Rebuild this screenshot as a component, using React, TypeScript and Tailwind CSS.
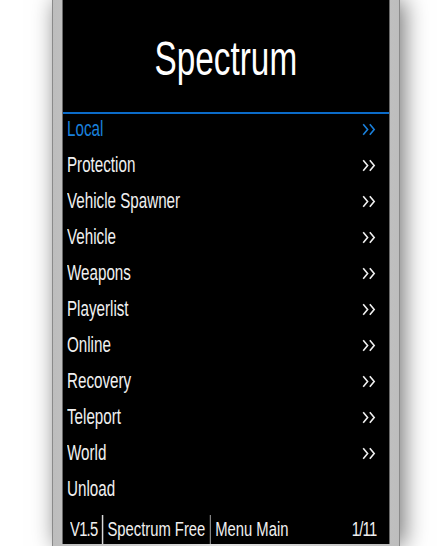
import React from "react";

const items = [
  "Local",
  "Protection",
  "Vehicle Spawner",
  "Vehicle",
  "Weapons",
  "Playerlist",
  "Online",
  "Recovery",
  "Teleport",
  "World",
];

function Chevrons() {
  return (
    <svg width="14" height="13" viewBox="0 0 14 13" fill="none">
      <path d="M1.2 1.2 L5.6 6.5 L1.2 11.8" stroke="currentColor" strokeWidth="1.6" />
      <path d="M7.8 1.2 L12.2 6.5 L7.8 11.8" stroke="currentColor" strokeWidth="1.6" />
    </svg>
  );
}

export default function App() {
  return (
    <div
      className="w-[447px] h-[546px] bg-white flex justify-center overflow-hidden"
      style={{ fontFamily: '"Liberation Sans", Arial, sans-serif' }}
    >
      <div className="ml-[5px] w-[348px] h-[546px] flex flex-col bg-gradient-to-r from-[#bdbdbd] via-[#e2e2e2] to-[#bdbdbd] border-x border-[#8a8a8a] px-[9px] pb-[2px] shadow-[4px_0_22px_rgba(0,0,0,0.55)]">
        <div className="flex-1 flex flex-col bg-black border-x border-[#6a6a6a]">
          {/* Header */}
          <div className="h-[112px] flex items-center justify-center pt-[4px]">
            <h1 className="text-white text-[49px] leading-none inline-block scale-x-[0.68] origin-center">Spectrum</h1>
          </div>
          <div className="h-[2px] bg-[#0b6bc9]" />

          {/* Menu */}
          <div className="flex flex-col">
            {items.map((item, i) => (
              <div
                key={item}
                className={`h-[36px] flex items-center justify-between pl-[4px] pr-[13px] pb-[6px] text-[22px] leading-none ${
                  i === 0 ? "text-[#1a80dc]" : "text-[#f0f0f0]"
                }`}
              >
                <span className="inline-block origin-left scale-x-[0.69] whitespace-nowrap">{item}</span>
                <Chevrons />
              </div>
            ))}
            <div className="h-[36px] flex items-center pl-[4px] pb-[6px] text-[22px] leading-none text-[#f0f0f0]">
              <span className="inline-block origin-left scale-x-[0.69]">Unload</span>
            </div>
          </div>

          {/* Footer */}
          <div className="flex-1 flex items-end pl-[7px] pr-[13px] text-[20px] leading-none text-[#f0f0f0]">
            <div className="flex-1 w-0">
              <div className="w-max flex items-end gap-[6px] origin-left scale-x-[0.74] whitespace-nowrap">
                <span className="pb-[5px] tracking-[-1px]">V1.5</span>
                <span className="shrink-0 w-[1.4px] h-[29px] bg-[#d8d8d8]" />
                <span className="pb-[5px]">Spectrum Free</span>
                <span className="shrink-0 w-[1.4px] h-[29px] bg-[#d8d8d8]" />
                <span className="pb-[5px]">Menu Main</span>
              </div>
            </div>
            <span className="pb-[5px] inline-block origin-right scale-x-[0.74] tracking-[-1px]">1/11</span>
          </div>
        </div>
      </div>
    </div>
  );
}
